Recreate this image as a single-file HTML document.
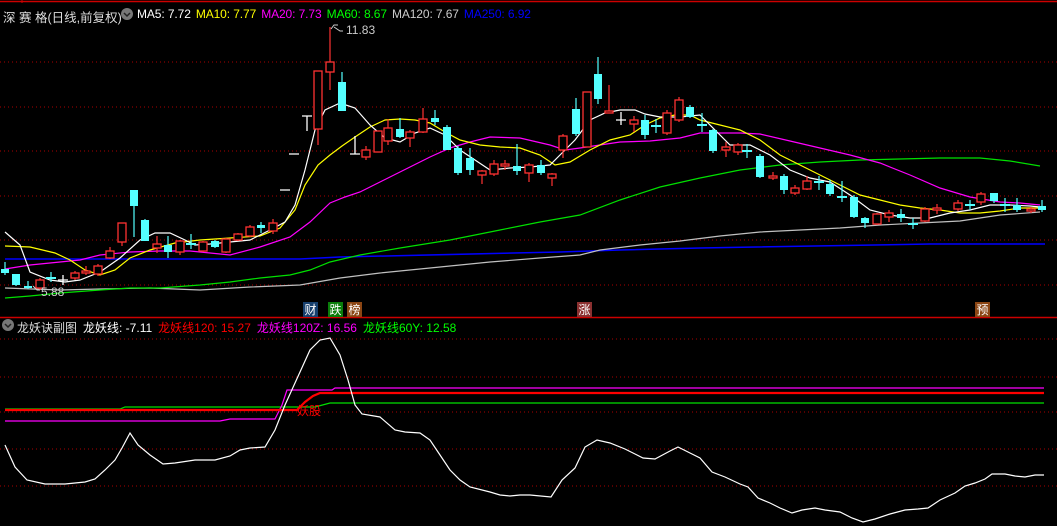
<!DOCTYPE html>
<html><head><meta charset="utf-8"><style>
html,body{margin:0;padding:0;background:#000;width:1057px;height:526px;overflow:hidden}
.t{position:absolute;font-family:"Liberation Sans","Noto Sans CJK SC",sans-serif;font-size:12px;white-space:nowrap}
.t span{margin-right:5px}
svg{position:absolute;left:0;top:0}
.b{position:absolute;top:302px;width:15px;height:15px;color:#fff;font-family:"Noto Sans CJK SC",sans-serif;font-size:12px;line-height:15px;text-align:center}
</style></head><body>
<svg width="1057" height="526" viewBox="0 0 1057 526">
<line x1="0" y1="1.5" x2="1057" y2="1.5" stroke="#c00" stroke-width="1.5"/>
<line x1="22" y1="0" x2="22" y2="3" stroke="#c00"/>
<g stroke="#a00" stroke-dasharray="1 3" stroke-width="1">
<line x1="0" y1="62" x2="1057" y2="62"/><line x1="0" y1="107" x2="1057" y2="107"/><line x1="0" y1="151" x2="1057" y2="151"/><line x1="0" y1="196" x2="1057" y2="196"/><line x1="0" y1="240" x2="1057" y2="240"/><line x1="0" y1="285" x2="1057" y2="285"/>
<line x1="0" y1="339" x2="1057" y2="339"/><line x1="0" y1="377" x2="1057" y2="377"/><line x1="0" y1="412" x2="1057" y2="412"/><line x1="0" y1="449" x2="1057" y2="449"/><line x1="0" y1="486" x2="1057" y2="486"/>
</g>
<line x1="0" y1="317.5" x2="1057" y2="317.5" stroke="#c00" stroke-width="1.5"/>
<g fill="none" stroke-width="1.2">
<polyline stroke="#0000ff" stroke-width="1.5" points="5,259 300,259 340,257 560,252 620,250 700,248 930,244 1045,244"/>
<polyline stroke="#c0c0c0" points="5,288 60,290 100,289 150,288 200,290 250,287 300,285 340,278 380,273 430,268 490,262 540,258 580,255 600,250 640,245 680,241 720,236 760,232 800,230 840,228 880,225 920,223 960,221 1000,215 1040,212"/>
<polyline stroke="#00e000" points="5,298 30,296 60,293 100,290 130,288 160,288 200,285 230,282 260,278 290,275 310,270 330,262 360,255 400,248 450,240 500,230 540,222 580,215 620,200 660,187 700,178 740,170 780,165 820,162 860,160 900,159 940,158 980,158 1010,161 1040,166"/>
<polyline stroke="#ff00ff" points="5,269 30,265 60,262 80,260 100,255 130,252 160,251 190,251 230,255 260,247 290,237 310,222 330,203 345,197 360,192 380,182 410,167 430,157 450,148 470,142 490,137 520,138 550,145 565,150 580,148 600,145 620,142 650,141 680,138 700,133 720,133 740,133 760,134 790,141 820,148 850,155 880,163 910,175 940,188 970,197 1000,202 1020,203 1040,205"/>
<polyline stroke="#ffff00" points="5,246 30,247 55,253 70,260 85,270 100,275 115,270 130,258 150,250 175,243 200,240 230,238 260,236 280,228 295,210 305,185 318,165 330,155 342,146 355,137 370,127 385,120 400,119 415,120 430,123 445,132 460,140 480,145 500,147 520,148 540,155 555,165 570,162 590,150 610,140 630,135 645,125 660,118 675,115 690,115 700,120 720,125 740,130 760,140 780,155 800,165 820,175 840,185 860,195 880,200 900,205 920,208 940,210 960,213 980,213 1000,211 1020,208 1040,208"/>
<polyline stroke="#fff" points="5,232 20,245 30,272 50,280 65,282 80,280 100,272 120,258 140,240 155,233 170,233 185,240 195,245 210,244 230,242 250,240 270,230 285,222 295,205 305,170 315,130 325,110 340,103 355,108 370,125 385,138 400,142 415,133 430,128 445,135 460,150 475,160 490,170 510,168 530,167 550,165 560,155 575,140 590,120 605,113 620,110 635,110 645,114 660,117 680,117 700,115 715,130 730,145 750,145 770,155 790,170 810,178 830,182 850,195 870,210 890,215 910,218 930,218 950,213 970,210 990,205 1010,205 1030,206 1040,207"/>
</g>
<path stroke="#ff3232" stroke-width="1.2" fill="none" d="M40,278V290M75,271V280M86,266V275M98,264V276M110,247V259M122,223V246M157,236V253M180,240V255M203,241V252M226,238V253M238,233V241M250,225V237M273,219V234M318,71V145M330,27V90M366,146V160M378,131V152M388,119V145M410,130V147M423,108V133M482,170V184M494,160V176M505,160V170M529,163V182M552,173V186M563,134V158M587,92V147M609,85V113M634,116V132M667,110V135M679,97V122M726,142V157M738,143V155M773,172V180M795,185V195M807,176V190M877,213V225M889,210V222M925,207V222M937,204V214M958,200V211M981,192V205M1031,207V213"/>
<g fill="#000" stroke="#ff3232" stroke-width="1.3">
<rect x="36" y="280" width="8" height="8"/><rect x="71" y="273" width="8" height="5"/><rect x="82" y="271" width="8" height="2"/><rect x="94" y="266" width="8" height="8"/><rect x="106" y="251" width="8" height="7"/><rect x="118" y="223" width="8" height="19"/><rect x="153" y="244" width="8" height="4"/><rect x="176" y="241" width="8" height="11"/><rect x="199" y="242" width="8" height="9"/><rect x="222" y="239" width="8" height="13"/><rect x="234" y="234" width="8" height="6"/><rect x="246" y="227" width="8" height="9"/><rect x="269" y="223" width="8" height="8"/><rect x="314" y="71" width="8" height="58"/><rect x="326" y="62" width="8" height="10"/><rect x="362" y="150" width="8" height="7"/><rect x="374" y="131" width="8" height="21"/><rect x="384" y="128" width="8" height="13"/><rect x="406" y="132" width="8" height="6"/><rect x="419" y="119" width="8" height="13"/><rect x="478" y="171" width="8" height="4"/><rect x="490" y="164" width="8" height="10"/><rect x="501" y="164" width="8" height="2"/><rect x="525" y="165" width="8" height="8"/><rect x="548" y="174" width="8" height="4"/><rect x="559" y="136" width="8" height="14"/><rect x="583" y="92" width="8" height="55"/><rect x="605" y="111" width="8" height="2"/><rect x="630" y="120" width="8" height="4"/><rect x="663" y="113" width="8" height="20"/><rect x="675" y="100" width="8" height="20"/><rect x="722" y="147" width="8" height="3"/><rect x="734" y="145" width="8" height="7"/><rect x="769" y="176" width="8" height="2"/><rect x="791" y="188" width="8" height="5"/><rect x="803" y="181" width="8" height="8"/><rect x="873" y="214" width="8" height="10"/><rect x="885" y="213" width="8" height="4"/><rect x="921" y="209" width="8" height="12"/><rect x="933" y="208" width="8" height="2"/><rect x="954" y="203" width="8" height="6"/><rect x="977" y="194" width="8" height="8"/><rect x="1027" y="209" width="8" height="2"/>
</g>
<path stroke="#54ffff" stroke-width="1.2" fill="none" d="M5,262V275M16,274V286M28,281V289M51,272V282M134,190V237M145,219V241M168,236V258M191,234V249M215,240V248M261,222V233M342,72V111M400,118V138M435,110V125M447,125V150M458,146V175M470,148V175M517,144V175M541,160V175M576,98V136M598,57V104M645,115V139M656,119V133M690,105V118M702,113V132M713,129V153M747,144V158M760,154V178M784,174V194M819,176V190M830,180V196M842,181V202M854,195V218M865,217V228M901,209V222M913,218V229M970,200V210M994,193V203M1005,198V212M1017,198V212M1042,200V212"/>
<g fill="#54ffff">
<rect x="1" y="269" width="8" height="4"/><rect x="12" y="274" width="8" height="11"/><rect x="24" y="286" width="8" height="2"/><rect x="46" y="277" width="10" height="2"/><rect x="130" y="190" width="8" height="16"/><rect x="141" y="220" width="8" height="21"/><rect x="164" y="245" width="8" height="7"/><rect x="186" y="243" width="10" height="2"/><rect x="211" y="241" width="8" height="6"/><rect x="257" y="225" width="8" height="3"/><rect x="338" y="82" width="8" height="29"/><rect x="396" y="129" width="8" height="8"/><rect x="431" y="118" width="8" height="4"/><rect x="443" y="127" width="8" height="23"/><rect x="454" y="148" width="8" height="25"/><rect x="466" y="158" width="8" height="12"/><rect x="513" y="166" width="8" height="5"/><rect x="537" y="165" width="8" height="8"/><rect x="572" y="109" width="8" height="25"/><rect x="594" y="74" width="8" height="25"/><rect x="641" y="120" width="8" height="15"/><rect x="651" y="125" width="10" height="2"/><rect x="686" y="107" width="8" height="10"/><rect x="697" y="124" width="10" height="2"/><rect x="709" y="130" width="8" height="21"/><rect x="742" y="150" width="10" height="2"/><rect x="756" y="156" width="8" height="21"/><rect x="780" y="176" width="8" height="14"/><rect x="814" y="181" width="10" height="2"/><rect x="826" y="184" width="8" height="10"/><rect x="837" y="196" width="10" height="2"/><rect x="850" y="197" width="8" height="20"/><rect x="861" y="218" width="8" height="5"/><rect x="897" y="214" width="8" height="4"/><rect x="908" y="223" width="10" height="2"/><rect x="965" y="204" width="10" height="2"/><rect x="990" y="193" width="8" height="8"/><rect x="1000" y="204" width="10" height="2"/><rect x="1013" y="205" width="8" height="5"/><rect x="1038" y="206" width="8" height="4"/>
</g>
<path stroke="#fff" stroke-width="1.3" fill="none" d="M58,280H68M63,275V285M280,190H290M289,154H299M302,116H312M307,116V131M350,154H360M355,136V154M616,120H626M621,112V125"/>
<path stroke="#ccc" fill="none" d="M331,29l3,-4h4M334,27l6,4h3M33,286l4,4h3"/>
<g fill="none">
<polyline stroke="#00e000" stroke-width="1.2" points="5,409 120,409 125,407 295,407 315,407 330,403 1044,403"/>
<polyline stroke="#ff00ff" stroke-width="1.2" points="5,421 220,421 230,419 275,419 282,405 287,390 332,390 335,388 1044,388"/>
<polyline stroke="#ff0000" stroke-width="2.2" points="5,410 297,410 305,402 313,396 320,393 1044,393"/>
<polyline stroke="#fff" stroke-width="1.2" points="5,445 15,467 27,480 45,484 65,484 85,482 95,479 105,470 115,460 122,448 130,433 138,445 150,455 163,464 175,463 195,460 215,460 230,456 240,450 250,448 265,447 275,430 285,405 300,372 310,350 320,340 330,338 340,355 348,380 355,405 362,414 380,417 395,430 405,432 420,433 430,440 440,455 450,470 460,480 470,487 490,492 500,495 510,496 520,495 530,495 551,497 562,480 575,468 585,447 597,440 610,443 625,449 643,458 655,459 670,451 678,447 690,453 700,458 712,472 725,477 740,484 748,487 758,498 770,503 780,508 792,513 802,510 815,508 825,510 840,512 852,518 863,522 875,519 890,514 905,510 918,509 928,508 940,500 955,493 965,486 975,483 985,479 992,474 1005,474 1015,476 1025,477 1035,475 1044,475"/>
</g>
<circle cx="127" cy="14" r="6" fill="#777"/><path d="M124,13l3,3l3,-3" stroke="#222" stroke-width="1.5" fill="none"/>
<circle cx="8" cy="325" r="6" fill="#777"/><path d="M5,324l3,3l3,-3" stroke="#222" stroke-width="1.5" fill="none"/>
</svg>
<div class="t" style="left:3px;top:7px;color:#ddd;font-size:12.5px">深 赛 格(日线,前复权)</div>
<div class="t" style="left:137px;top:7px;letter-spacing:-0.1px"><span style="color:#fff">MA5: 7.72</span><span style="color:#ff0">MA10: 7.77</span><span style="color:#f0f">MA20: 7.73</span><span style="color:#0f0">MA60: 8.67</span><span style="color:#ccc">MA120: 7.67</span><span style="color:#00f">MA250: 6.92</span></div>
<div class="t" style="left:346px;top:23px;color:#ccc">11.83</div>
<div class="t" style="left:41px;top:285px;color:#ccc">5.88</div>
<div class="b" style="left:303px;background:#17406e">财</div>
<div class="b" style="left:328px;background:#0a7d0a">跌</div>
<div class="b" style="left:347px;background:#8b4513">榜</div>
<div class="b" style="left:577px;background:#8b3030">涨</div>
<div class="b" style="left:975px;background:#8b4513">预</div>
<div class="t" style="left:17px;top:319px;color:#ddd;letter-spacing:0px"><span style="margin-right:6px">龙妖诀副图</span><span style="color:#fff;margin-right:6px">龙妖线: -7.11</span><span style="color:#f00;margin-right:6px">龙妖线120: 15.27</span><span style="color:#f0f;margin-right:6px">龙妖线120Z: 16.56</span><span style="color:#0f0">龙妖线60Y: 12.58</span></div>
<div class="t" style="left:297px;top:402px;color:#f00;font-size:12px">妖股</div>
</body></html>
